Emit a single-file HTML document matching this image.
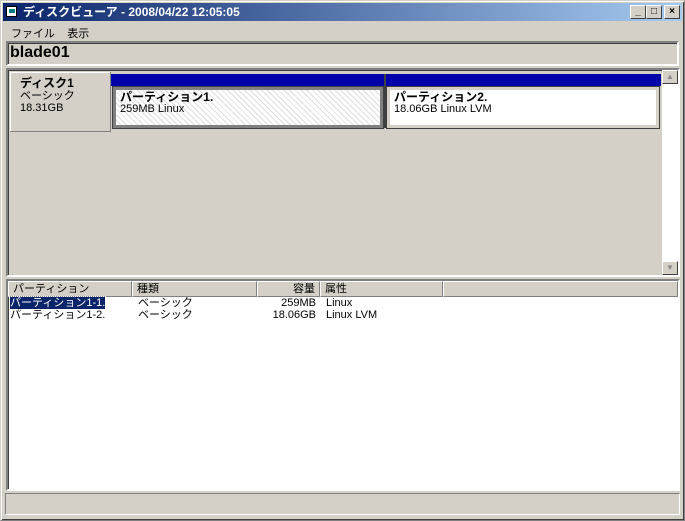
<!DOCTYPE html><html><head><meta charset="utf-8"><style>
*{box-sizing:border-box;margin:0;padding:0}
body{width:685px;height:521px;background:#d4d0c8;font-family:"Liberation Sans","Noto Sans CJK JP",sans-serif;font-size:11px;position:relative;overflow:hidden}
.a{position:absolute}
.win{left:0;top:0;width:685px;height:521px;border:1px solid #808080;border-top-color:#d4d0c8;border-left-color:#d4d0c8;box-shadow:inset 1px 1px #fff,inset -1px -1px #404040}
.title{left:3px;top:3px;width:679px;height:18px;background:linear-gradient(90deg,#0a246a,#a6caf0);color:#fff;font-weight:bold;font-size:12px;line-height:18px;padding-left:20px}
.btn{top:5px;width:16px;height:14px;background:#d4d0c8;border:1px solid;border-color:#fff #404040 #404040 #fff;font-size:10px;line-height:12px;text-align:center;color:#000;font-weight:bold}
.sunk{border:2px solid;border-color:#808080 #fff #fff #808080;box-shadow:inset 1px 1px #404040}
.hdr{top:281px;height:16px;background:#d4d0c8;border:1px solid;border-color:#fff #808080 #808080 #fff;line-height:14px;padding-left:4px}
</style></head><body>
<div class="a win"></div>
<div class="a title">ディスクビューア - 2008/04/22 12:05:05</div>
<div class="a" style="left:6px;top:6px;width:11px;height:11px;background:#fff;border:1px solid #000"><div style="margin:2px;width:6px;height:4px;background:#008080"></div></div>
<div class="a btn" style="left:630px">_</div><div class="a btn" style="left:646px">□</div><div class="a btn" style="left:664px">×</div>
<div class="a" style="left:11px;top:25px;font-size:11px">ファイル&nbsp;&nbsp;&nbsp;&nbsp;表示</div>
<div class="a sunk" style="left:6px;top:41px;width:673px;height:25px;background:#d4d0c8"></div>
<div class="a" style="left:10px;top:44px;font-size:16px;font-weight:bold">blade01</div>
<div class="a sunk" style="left:6px;top:68px;width:674px;height:209px;background:#d4d0c8"></div>
<div class="a" style="left:10px;top:72px;width:101px;height:60px;border-right:1px solid #808080;border-bottom:1px solid #808080;box-shadow:inset 1px 1px #fff;padding:5px 0 0 10px;line-height:12px"><b style="font-size:12px">ディスク1</b><br>ベーシック<br>18.31GB</div>
<div class="a" style="left:111px;top:74px;width:550px;height:12px;background:#0000a8"></div>
<div class="a" style="left:384px;top:74px;width:2px;height:54px;background:#404040"></div>
<div class="a" style="left:113px;top:87px;width:270px;height:41px;border:3px solid #808080;outline:1px solid #404040;background:repeating-linear-gradient(45deg,#fff 0 3px,#ddd 3px 4px);padding:2px 4px;line-height:11px"><b style="font-size:12px">パーティション1.</b><br>259MB Linux</div>
<div class="a" style="left:387px;top:87px;width:272px;height:41px;border:3px solid #d4d0c8;outline:1px solid #404040;background:#fff;padding:2px 4px;line-height:11px"><b style="font-size:12px">パーティション2.</b><br>18.06GB Linux LVM</div>
<div class="a" style="left:662px;top:70px;width:16px;height:205px;background:#fff"></div>
<div class="a btn" style="left:662px;top:70px;font-size:8px;color:#888">▲</div>
<div class="a btn" style="left:662px;top:261px;font-size:8px;color:#888">▼</div>
<div class="a sunk" style="left:6px;top:279px;width:674px;height:212px;background:#fff"></div>
<div class="a hdr" style="left:8px;width:124px">パーティション</div>
<div class="a hdr" style="left:132px;width:125px">種類</div>
<div class="a hdr" style="left:257px;width:63px;text-align:right;padding-right:4px">容量</div>
<div class="a hdr" style="left:320px;width:123px">属性</div>
<div class="a hdr" style="left:443px;width:235px"></div>
<div class="a" style="left:10px;top:297px;line-height:12px"><span style="background:#0a246a;color:#fff;outline:1px dotted #fff">パーティション1-1.</span><br>パーティション1-2.</div>
<div class="a" style="left:138px;top:297px;line-height:12px">ベーシック<br>ベーシック</div>
<div class="a" style="left:257px;top:297px;width:59px;text-align:right;line-height:12px">259MB<br>18.06GB</div>
<div class="a" style="left:326px;top:297px;line-height:12px">Linux<br>Linux LVM</div>
<div class="a" style="left:5px;top:493px;width:675px;height:22px;border:1px solid;border-color:#808080 #fff #fff #808080"></div>
</body></html>
